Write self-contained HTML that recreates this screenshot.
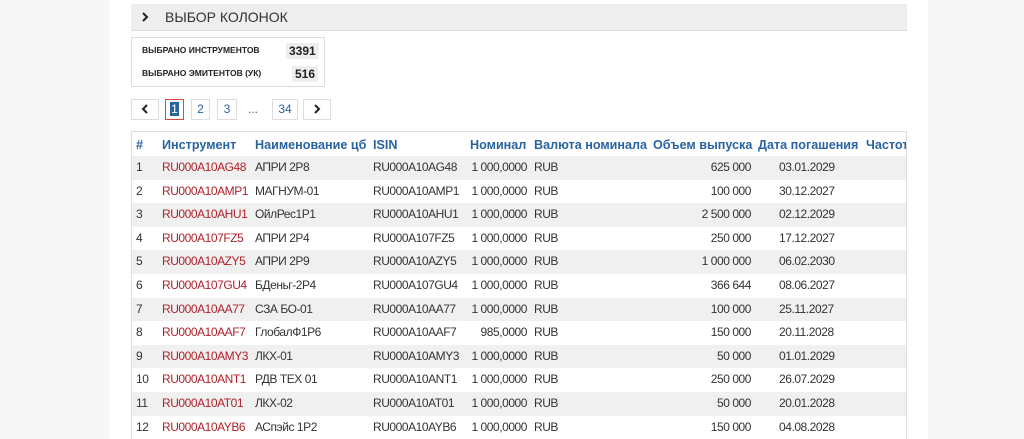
<!DOCTYPE html>
<html><head><meta charset="utf-8"><style>
*{margin:0;padding:0;box-sizing:border-box}
body{width:1024px;height:439px;overflow:hidden;background:#f7f7f7;font-family:"Liberation Sans","DejaVu Sans",sans-serif;font-size:12px;color:#333;position:relative}
.main{position:absolute;left:110px;top:0;width:818px;height:439px;background:#fff}
.a{position:absolute;white-space:nowrap}
.bar{position:absolute;left:131px;top:4px;width:776px;height:27px;background:#eee;border-bottom:1px solid #ddd}
.stats{position:absolute;left:131px;top:37px;width:194px;height:50px;border:1px solid #ddd}
.lbl{font-size:8.5px;font-weight:bold;color:#222}
.num{background:#eee;font-weight:bold;font-size:12px;padding:1px 3px;color:#222}
.pg{position:absolute;top:99px;height:21px;border:1px solid #ddd;text-align:center;line-height:19px;color:#2a64a0;font-size:12px}
.tbl{position:absolute;left:131px;top:131px;width:776px;height:308px;border-left:1px solid #ddd;border-top:1px solid #ddd;border-right:1px solid #ddd;overflow:hidden}
.th{position:absolute;top:0;height:24px;line-height:26px;font-weight:bold;color:#2a64a0;font-size:12.6px;white-space:nowrap}
.row{position:absolute;left:0;width:776px;height:23.6px;line-height:23.6px;font-size:12px;letter-spacing:-0.45px}
.row.g{background:#f0f0f0}
.c{position:absolute;white-space:nowrap;top:0}
.r{color:#b0212b}
</style></head><body>
<div class="main"></div>
<div class="bar"><svg class="a" style="left:10px;top:8px" width="8" height="10"><path d="M2 1 L6 5 L2 9" stroke="#222" stroke-width="2" fill="none"/></svg><span class="a" style="left:34px;top:5px;font-size:14px;color:#333">ВЫБОР КОЛОНОК</span></div>
<div class="stats">
<span class="a lbl" style="left:10px;top:7px">ВЫБРАНО ИНСТРУМЕНТОВ</span>
<span class="a num" style="left:154px;top:5px">3391</span>
<span class="a lbl" style="left:10px;top:30px">ВЫБРАНО ЭМИТЕНТОВ (УК)</span>
<span class="a num" style="left:160px;top:28px">516</span>
</div>
<div class="pg" style="left:131px;width:28px"><svg width="8" height="10" style="margin-top:4px"><path d="M6 1 L2 5 L6 9" stroke="#222" stroke-width="2" fill="none"/></svg></div>
<div class="pg" style="left:165px;width:19px;border-color:#d44"><span style="background:#2a64a0;color:#fff;padding:0 1px">1</span></div>
<div class="pg" style="left:191px;width:19px">2</div>
<div class="pg" style="left:217px;width:20px">3</div>
<div class="a" style="left:248px;top:102px;color:#666">...</div>
<div class="pg" style="left:272px;width:26px">34</div>
<div class="pg" style="left:303px;width:28px"><svg width="8" height="10" style="margin-top:4px"><path d="M2 1 L6 5 L2 9" stroke="#222" stroke-width="2" fill="none"/></svg></div>
<div class="tbl">
<div class="th" style="left:4px">#</div>
<div class="th" style="left:30px">Инструмент</div>
<div class="th" style="left:123px">Наименование цб</div>
<div class="th" style="left:241px">ISIN</div>
<div class="th" style="left:338px">Номинал</div>
<div class="th" style="left:402px">Валюта номинала</div>
<div class="th" style="left:521px">Объем выпуска</div>
<div class="th" style="left:626px">Дата погашения</div>
<div class="th" style="left:734px">Частота</div>
<div id="rows"></div>
</div>
<script>
var d=[["RU000A10AG48","АПРИ 2Р8","1 000,0000","625 000","03.01.2029"],
["RU000A10AMP1","МАГНУМ-01","1 000,0000","100 000","30.12.2027"],
["RU000A10AHU1","ОйлРес1Р1","1 000,0000","2 500 000","02.12.2029"],
["RU000A107FZ5","АПРИ 2Р4","1 000,0000","250 000","17.12.2027"],
["RU000A10AZY5","АПРИ 2Р9","1 000,0000","1 000 000","06.02.2030"],
["RU000A107GU4","БДеньг-2Р4","1 000,0000","366 644","08.06.2027"],
["RU000A10AA77","СЗА БО-01","1 000,0000","100 000","25.11.2027"],
["RU000A10AAF7","ГлобалФ1Р6","985,0000","150 000","20.11.2028"],
["RU000A10AMY3","ЛКХ-01","1 000,0000","50 000","01.01.2029"],
["RU000A10ANT1","РДВ ТЕХ 01","1 000,0000","250 000","26.07.2029"],
["RU000A10AT01","ЛКХ-02","1 000,0000","50 000","20.01.2028"],
["RU000A10AYB6","АСпэйс 1Р2","1 000,0000","150 000","04.08.2028"]];
var h="";
d.forEach(function(r,i){
h+='<div class="row'+(i%2==0?' g':'')+'" style="top:'+(24+i*23.6)+'px">'+
'<span class="c" style="left:4px">'+(i+1)+'</span>'+
'<span class="c r" style="left:30px">'+r[0]+'</span>'+
'<span class="c" style="left:123px">'+r[1]+'</span>'+
'<span class="c" style="left:241px">'+r[0]+'</span>'+
'<span class="c" style="right:381px">'+r[2]+'</span>'+
'<span class="c" style="left:402px">RUB</span>'+
'<span class="c" style="right:157px">'+r[3]+'</span>'+
'<span class="c" style="left:647px">'+r[4]+'</span></div>';});
document.getElementById("rows").innerHTML=h;
</script>
</body></html>
